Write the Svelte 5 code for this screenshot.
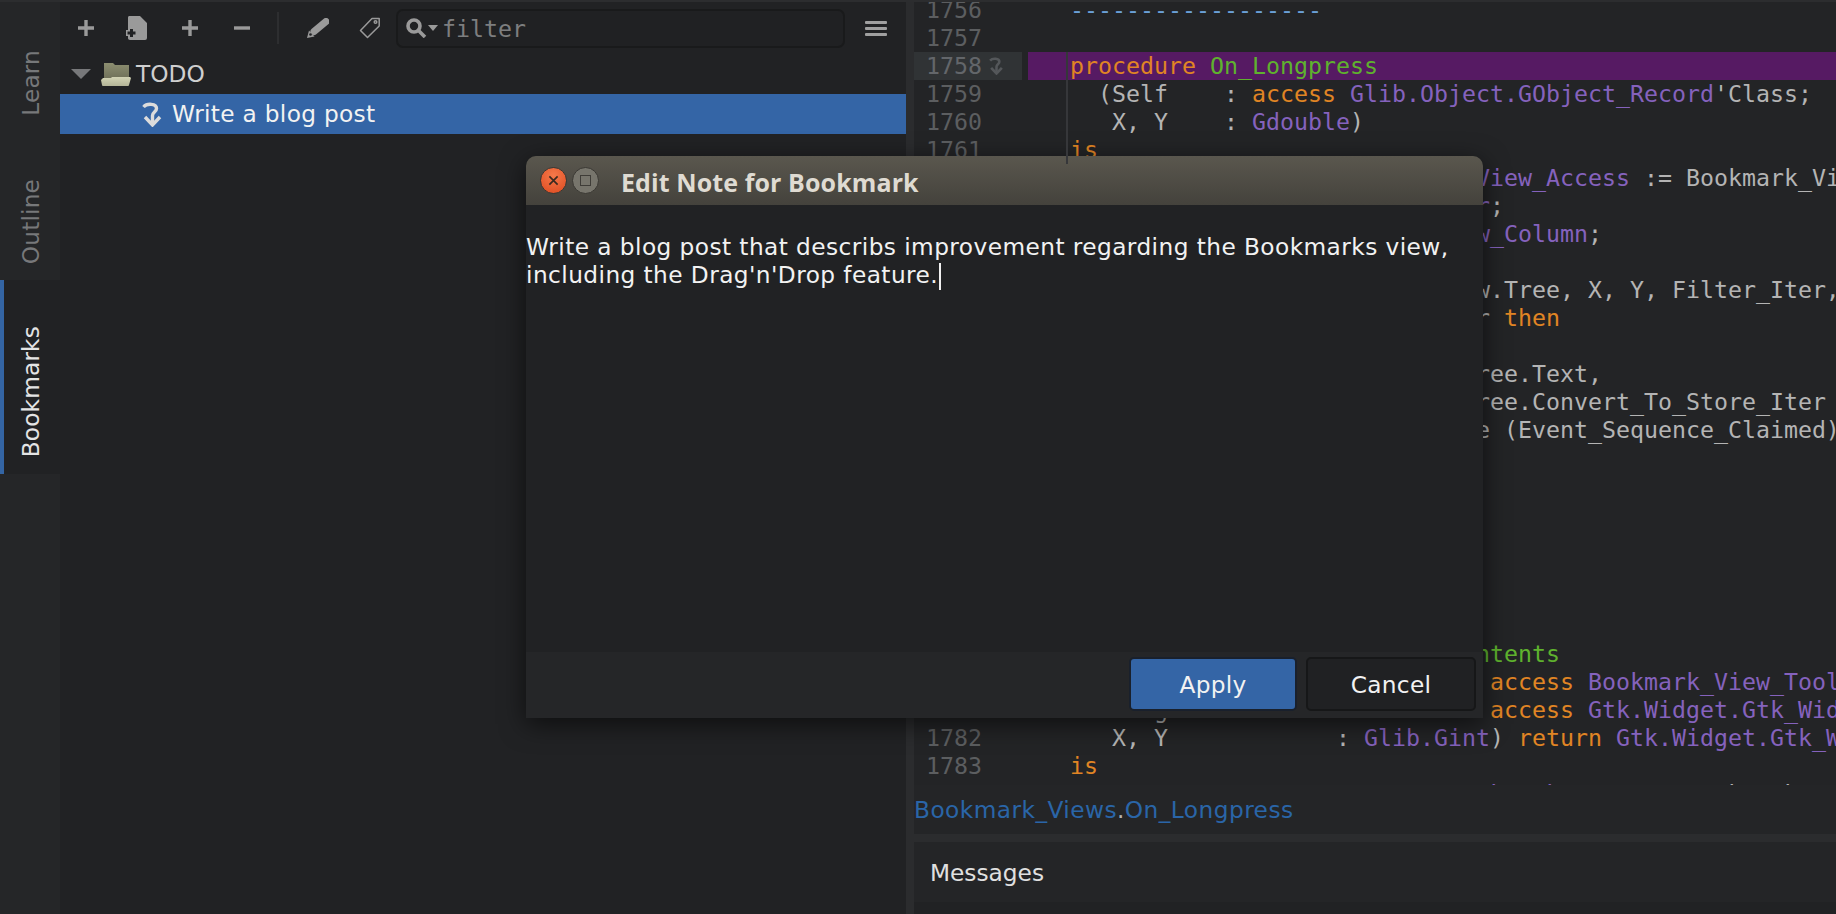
<script>
  // [text, kind] pairs per source line, starting at line 1756
  const k = "kw", t = "ty", f = "fn", c = "cm", p = "";
  const source = [
    [["------------------", c]],
    [],
    [["procedure", k], [" ", p], ["On_Longpress", f]],
    [["  (Self    : ", p], ["access", k], [" ", p], ["Glib.Object.GObject_Record", t], ["'Class;", p]],
    [["   X, Y    : ", p], ["Gdouble", t], [")", p]],
    [["is", k]],
    [["   Tree  : ", p], ["constant", k], [" ", p], ["Bookmark_View_Access", t], [" := Bookmark_View_Access (Self);", p]],
    [["   Filter_Iter : ", p], ["Gtk_Tree_Iter", t], [";", p]],
    [["   Column      : ", p], ["Gtk_Tree_View_Column", t], [";", p]],
    [["begin", k]],
    [["   Coords_To_Filter (Tree.View.Tree, X, Y, Filter_Iter,", p]],
    [["   ", p], ["if", k], [" Filter_Iter /= Null_Iter ", p], ["then", k]],
    [],
    [["      Start_Edit_Note (Self.Tree.Text,", p]],
    [["                       Self.Tree.Convert_To_Store_Iter", p]],
    [["      Self.Longpress.Set_State (Event_Sequence_Claimed);", p]],
    [["   ", p], ["end if", k], [";", p]],
    [["end", k], [" On_Longpress;", p]],
    [],
    [],
    [],
    [],
    [],
    [["   ", p], ["function", k], [" ", p], ["Create_Tooltip_Contents", f]],
    [["  (Self            : ", p], ["not null access", k], [" ", p], ["Bookmark_View_Tooltips_Record", t], [";", p]],
    [["   Widget          : ", p], ["not null access", k], [" ", p], ["Gtk.Widget.Gtk_Widget_Record", t], ["'Class;", p]],
    [["   X, Y            : ", p], ["Glib.Gint", t], [") ", p], ["return", k], [" ", p], ["Gtk.Widget.Gtk_Widget", t], [";", p]],
    [["is", k]],
    [["   Tree         : ", p], ["constant", k], [" ", p], ["Bookmark_Tree", t], [" := Bookmark_Tree (Self.Tree);", p]]
  ];
  const firstLine = 1756;
  const currentLine = 1758;
</script>

<div class="window">
  <div class="top-strip"></div>
  <div class="main">
    <aside class="side">
      <nav class="tabs">
        <div class="tab learn"><span>Learn</span></div>
        <div class="tab outline"><span>Outline</span></div>
        <div class="tab bookmarks"><span>Bookmarks</span></div>
      </nav>
      <section class="panel">
        <div class="toolbar">
          <svg class="ic plus" viewBox="0 0 16 16"><path d="M8 0v16M0 8h16" /></svg>
          <svg class="ic doc" viewBox="0 0 21 24">
            <path class="solid" d="M5 0h9l7 7v15a2 2 0 0 1-2 2H4a2 2 0 0 1-2-2V2a2 2 0 0 1 3-2z" />
            <path class="doc-halo" d="M5.500 11v12M0 17h11" />
            <path class="doc-plus" d="M5.500 13v8M1.500 17h8" />
          </svg>
          <svg class="ic plus second" viewBox="0 0 16 16"><path d="M8 0v16M0 8h16" /></svg>
          <svg class="ic plus minus" viewBox="0 0 16 16"><path d="M0 8h16" /></svg>
          <div class="sep"></div>
          <svg class="ic pencil" viewBox="0 0 22 20">
            <path class="pencil-body" d="M7 13.500L19 3.500" />
            <path class="solid" d="M0 20l2-7.500 5.500 6z" />
            <circle class="pencil-dot" cx="3.500" cy="16.500" r="1.300" />
          </svg>
          <svg class="ic tag" viewBox="0 0 22 22"><path class="line" d="M13 1.500h7.200v7.500L8.500 20.500 1.500 13.500z" stroke-linejoin="round" /><circle class="line" cx="16.500" cy="5" r="1.300" /></svg>
          <div class="filter">
            <svg class="search" viewBox="0 0 32 20"><circle class="line heavy" cx="8" cy="8" r="6" /><path class="line heavy" d="M12.500 12.500L19 19" /><path class="solid" d="M22 7h10l-5 6z" /></svg>
            <span>filter</span>
          </div>
          <div class="burger"><i></i><i></i><i></i></div>
        </div>
        <div class="row">
          <svg class="caret" viewBox="0 0 20 10"><path d="M0 0h20L10 10z" /></svg>
          <svg class="folder" viewBox="0 0 30 24">
            <defs>
              <linearGradient id="fback" x1="0" y1="0" x2="0" y2="1"><stop offset="0" stop-color="#8c8e70" /><stop offset="1" stop-color="#6f7059" /></linearGradient>
              <linearGradient id="ffront" x1="0" y1="0" x2="0" y2="1"><stop offset="0" stop-color="#d2d3b4" /><stop offset="1" stop-color="#b4b598" /></linearGradient>
            </defs>
            <path fill="url(#fback)" d="M3 1h9l2 2h14v14H3z" />
            <path fill="url(#ffront)" d="M2 16h8l1-1h18l1 1-2 7a1 1 0 0 1-1 1H2a1 1 0 0 1-1-1L0 18z" />
          </svg>
          <span class="todo">TODO</span>
        </div>
        <div class="row selected">
          <svg class="note" viewBox="0 0 21 25"><path d="M1.500 5C5 1 14.500 1.500 14.500 6.500 14.500 10 10.500 10 10.500 13.500V22" /><path class="head" d="M3 15l7.500 8 7.500-8" /></svg>
          <span>Write a blog post</span>
        </div>
      </section>
    </aside>
    <div class="divider"></div>
    <div class="right">
      <div class="editor">
        <div class="block-line"></div>
        <div class="code">
          {#each source as line, i}
            <div class="line" class:current={firstLine + i === currentLine}>
              <div class="num">
                <span>{firstLine + i}</span>
                {#if firstLine + i === currentLine}
                  <svg class="mark" viewBox="0 0 21 25"><path d="M1.500 5C5 1 14.500 1.500 14.500 6.500 14.500 10 10.500 10 10.500 13.500V22" /><path class="head" d="M3 15l7.500 8 7.500-8" /></svg>
                {/if}
              </div>
              <div class="txt">{#each line as [text, kind]}<span class={kind}>{text}</span>{/each}</div>
            </div>
          {/each}
        </div>
      </div>
      <div class="crumbs"><span>Bookmark_Views</span><b>.</b><span>On_Longpress</span></div>
      <div class="split"></div>
      <div class="messages"><span>Messages</span></div>
      <div class="bottom"></div>
    </div>
  </div>

  <div class="dialog">
    <header>
      <div class="btn close"><svg viewBox="0 0 12 12"><path d="M1.500 1.500l9 9M10.500 1.500l-9 9" /></svg></div>
      <div class="btn max"><i></i></div>
      <h1>Edit Note for Bookmark</h1>
    </header>
    <div class="body">
      <p>Write a blog post that describs improvement regarding the Bookmarks view,<br />including the Drag'n'Drop feature.<i class="cursor"></i></p>
    </div>
    <footer>
      <button class="apply">Apply</button>
      <button class="cancel">Cancel</button>
    </footer>
  </div>
</div>

<style>
  :global(body) {
    margin: 0;
    background: #212224;
    overflow: hidden;
  }

  .window {
    position: relative;
    width: 1836px;
    height: 914px;
    overflow: hidden;
    display: flex;
    flex-direction: column;
    font-family: "DejaVu Sans", sans-serif;
  }

  .top-strip {
    height: 2px;
    background: #2c2d2f;
    flex: none;
  }

  .main {
    flex: 1;
    display: flex;
    min-height: 0;
  }

  .side {
    width: 906px;
    display: flex;
    flex: none;
  }

  .tabs {
    width: 60px;
    flex: none;
    background: #252628;
    display: flex;
    flex-direction: column;
  }

  .tab {
    display: flex;
    align-items: center;
    justify-content: center;
    box-sizing: border-box;
    padding-top: 30px;
    color: #77787a;
    font-size: 23.250px;
    letter-spacing: 0.150px;
  }

  .tab span {
    writing-mode: vertical-rl;
    transform: rotate(180deg);
  }

  .learn {
    height: 131px;
  }

  .outline {
    height: 147px;
  }

  .bookmarks {
    height: 194px;
    background: #212224;
    color: #e4e4e4;
    border-left: 4px solid #3465a4;
    padding-right: 4px;
  }

  .panel {
    flex: 1;
    background: #212224;
    display: flex;
    flex-direction: column;
  }

  .toolbar {
    height: 52px;
    display: flex;
    align-items: center;
    flex: none;
    position: relative;
    padding-left: 18px;
  }

  .ic {
    flex: none;
    fill: none;
    stroke: #9a9a9a;
  }

  .plus {
    width: 16px;
    height: 16px;
    stroke-width: 3.400;
  }

  .doc {
    width: 21px;
    height: 24px;
    margin-left: 32px;
    stroke: none;
  }

  .solid {
    fill: #9a9a9a;
    stroke: none;
  }

  .doc-halo {
    stroke: #9a9a9a;
    stroke-width: 6;
    fill: none;
  }

  .doc-plus {
    stroke: #212224;
    stroke-width: 3;
    fill: none;
  }

  .second {
    margin-left: 35px;
  }

  .minus {
    margin-left: 36px;
  }

  .sep {
    width: 2px;
    height: 32px;
    background: #2d2e30;
    margin-left: 27px;
    flex: none;
  }

  .pencil {
    width: 22px;
    height: 20px;
    margin-left: 28px;
    stroke: none;
  }

  .pencil-body {
    stroke: #9a9a9a;
    stroke-width: 7;
    stroke-linecap: round;
    fill: none;
  }

  .pencil-dot {
    fill: #212224;
    stroke: none;
  }

  .tag {
    width: 22px;
    height: 22px;
    margin-left: 30px;
  }

  .line {
    fill: none;
    stroke: #9a9a9a;
    stroke-width: 1.500;
  }

  .heavy {
    stroke-width: 3.600;
  }

  .filter {
    margin-left: 15px;
    width: 449px;
    height: 39px;
    box-sizing: border-box;
    border: 2px solid #191a1b;
    border-radius: 7px;
    background: #202123;
    display: flex;
    align-items: center;
    flex: none;
    color: #7d7e7f;
    font: 23.250px "DejaVu Sans Mono", monospace;
  }

  .search {
    width: 32px;
    height: 20px;
    margin-left: 8px;
    margin-right: 4px;
    flex: none;
  }

  .burger {
    margin-left: 20px;
    width: 22px;
    display: flex;
    flex-direction: column;
    gap: 3px;
    flex: none;
  }

  .burger i {
    display: block;
    height: 3px;
    background: #a0a0a0;
    border-radius: 1px;
  }

  .row {
    display: flex;
    align-items: center;
    height: 40px;
    flex: none;
    color: #f2f2f2;
    font-size: 23.250px;
    letter-spacing: 0.300px;
    box-sizing: border-box;
  }

  .row span {
    margin-bottom: 2px;
  }

  .row:not(.selected) {
    padding-left: 11px;
    letter-spacing: 0;
  }

  .caret {
    width: 20px;
    height: 10px;
    fill: #77787a;
    flex: none;
  }

  .folder {
    width: 30px;
    height: 24px;
    margin-left: 10px;
    flex: none;
  }

  .todo {
    margin-left: 5px;
    color: #cfcfcf;
  }

  .selected {
    background: #3465a6;
    padding-left: 82px;
  }

  .note {
    width: 21px;
    height: 25px;
    flex: none;
    fill: none;
    stroke: #dcdcdc;
    stroke-width: 3.400;
    margin-right: 9px;
  }

  .divider {
    width: 8px;
    flex: none;
    background: #2b2c2e;
  }

  .right {
    flex: 1;
    min-width: 0;
    display: flex;
    flex-direction: column;
    background: #232426;
  }

  .editor {
    height: 783px;
    flex: none;
    overflow: hidden;
    position: relative;
    font: 23.250px/28px "DejaVu Sans Mono", monospace;
    color: #b4b4b4;
  }

  .code {
    margin-top: -6px;
  }

  .block-line {
    position: absolute;
    left: 152px;
    top: 50px;
    width: 2px;
    height: 112px;
    background: #36373a;
    z-index: 1;
  }

  .line {
    height: 28px;
    display: flex;
    white-space: pre;
  }

  .num {
    width: 108px;
    flex: none;
    box-sizing: border-box;
    padding-left: 12px;
    color: #5c5e60;
    display: flex;
    align-items: center;
  }

  .current .num {
    background: #303335;
    color: #63666a;
  }

  .mark {
    width: 15px;
    height: 18px;
    margin-left: 7px;
    fill: none;
    stroke: #54575a;
    stroke-width: 3.600;
  }

  .txt {
    flex: 1;
    margin-left: 6px;
    padding-left: 42px;
  }

  .current .txt {
    background: #561a63;
  }

  .kw {
    color: #e08524;
  }

  .ty {
    color: #8562bd;
  }

  .fn {
    color: #5fb22e;
  }

  .cm {
    color: #6a9fd6;
  }

  .crumbs {
    height: 49px;
    flex: none;
    display: flex;
    align-items: center;
    background: #242527;
    font: 23.250px "DejaVu Sans", sans-serif;
    letter-spacing: 0.450px;
    color: #2a65a8;
  }

  .crumbs b {
    font-weight: normal;
    color: #b4b4b4;
  }

  .split {
    height: 8px;
    flex: none;
    background: #2b2c2e;
  }

  .messages {
    height: 60px;
    flex: none;
    display: flex;
    align-items: center;
    padding-left: 16px;
    color: #e0e0e0;
    font-size: 23.250px;
    background: #242527;
  }

  .bottom {
    flex: 1;
    background: #212224;
  }

  .dialog {
    position: absolute;
    left: 526px;
    top: 156px;
    width: 957px;
    height: 562px;
    display: flex;
    flex-direction: column;
    background: #212224;
    border-radius: 10px 10px 0 0;
    box-shadow: 0 6px 26px rgba(0, 0, 0, 0.6);
  }

  header {
    height: 49px;
    flex: none;
    display: flex;
    align-items: center;
    padding-left: 14px;
    border-radius: 10px 10px 0 0;
    background: linear-gradient(#5a574e, #44423c);
  }

  .btn {
    width: 27px;
    height: 27px;
    border-radius: 50%;
    box-sizing: border-box;
    flex: none;
    display: flex;
    align-items: center;
    justify-content: center;
    border: 1px solid #3a3833;
  }

  .close {
    background: radial-gradient(circle at 50% 30%, #f5794a, #dd4a20);
  }

  .close svg {
    width: 11px;
    height: 11px;
    fill: none;
    stroke: #3a2a20;
    stroke-width: 1.800;
  }

  .max {
    margin-left: 5px;
    background: #77756c;
  }

  .max i {
    width: 9px;
    height: 9px;
    border: 1.500px solid #3f3d38;
  }

  h1 {
    margin: 3px 0 0 22px;
    font: bold 25px "Open Sans", sans-serif;
    letter-spacing: 0.100px;
    color: #dfdbd2;
  }

  .body {
    flex: 1;
    min-height: 0;
  }

  .body p {
    margin: 28px 0 0;
    color: #f2f2f2;
    font-size: 23.250px;
    letter-spacing: 0.430px;
    line-height: 28px;
  }

  .cursor {
    display: inline-block;
    width: 2px;
    height: 27px;
    background: #f0f0f0;
    vertical-align: -7px;
    margin-left: 1px;
  }

  footer {
    height: 66px;
    flex: none;
    box-sizing: border-box;
    padding-bottom: 2px;
    background: #252628;
    display: flex;
    align-items: center;
    justify-content: flex-end;
    gap: 9px;
    padding-right: 7px;
  }

  button {
    height: 54px;
    box-sizing: border-box;
    border-radius: 5px;
    font: 23.250px "DejaVu Sans", sans-serif;
    letter-spacing: 0.300px;
    color: #f2f2f2;
    border: 2px solid #161718;
  }

  .apply {
    width: 168px;
    background: #3465a6;
    border-color: #19202c;
  }

  .cancel {
    width: 170px;
    background: #202123;
  }
</style>
